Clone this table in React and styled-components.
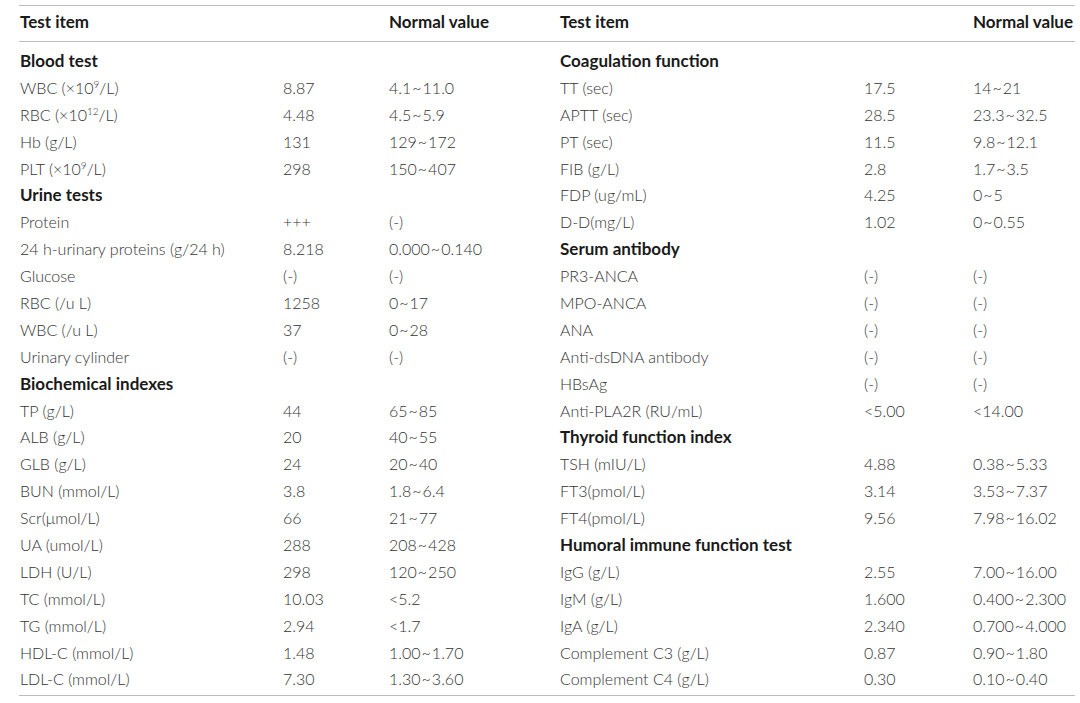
import React from "react";
import styled, { createGlobalStyle } from "styled-components";

const GlobalStyle = createGlobalStyle`
  body {
    margin: 0;
    background: #fff;
    font-family: Lato, "Open Sans", sans-serif;
  }
`;

const cols = "263px 106px 171px 304px 109px 103px";

// hair spaces round the tilde, as in the printed table
const r = (a, b) => `${a}\u200a~\u200a${b}`;

const left = [
  { head: "Blood test" },
  { name: <>WBC (×10<sup>9</sup>/L)</>, value: "8.87", normal: r("4.1", "11.0") },
  { name: <>RBC (×10<sup>12</sup>/L)</>, value: "4.48", normal: r("4.5", "5.9") },
  { name: "Hb (g/L)", value: "131", normal: r("129", "172") },
  { name: <>PLT (×10<sup>9</sup>/L)</>, value: "298", normal: r("150", "407") },
  { head: "Urine tests" },
  { name: "Protein", value: "+++", normal: "(-)" },
  { name: "24 h-urinary proteins (g/24 h)", value: "8.218", normal: r("0.000", "0.140") },
  { name: "Glucose", value: "(-)", normal: "(-)" },
  { name: "RBC (/u L)", value: "1258", normal: r("0", "17") },
  { name: "WBC (/u L)", value: "37", normal: r("0", "28") },
  { name: "Urinary cylinder", value: "(-)", normal: "(-)" },
  { head: "Biochemical indexes" },
  { name: "TP (g/L)", value: "44", normal: r("65", "85") },
  { name: "ALB (g/L)", value: "20", normal: r("40", "55") },
  { name: "GLB (g/L)", value: "24", normal: r("20", "40") },
  { name: "BUN (mmol/L)", value: "3.8", normal: r("1.8", "6.4") },
  { name: "Scr(μmol/L)", value: "66", normal: r("21", "77") },
  { name: "UA (umol/L)", value: "288", normal: r("208", "428") },
  { name: "LDH (U/L)", value: "298", normal: r("120", "250") },
  { name: "TC (mmol/L)", value: "10.03", normal: "<5.2" },
  { name: "TG (mmol/L)", value: "2.94", normal: "<1.7" },
  { name: "HDL-C (mmol/L)", value: "1.48", normal: r("1.00", "1.70") },
  { name: "LDL-C (mmol/L)", value: "7.30", normal: r("1.30", "3.60") },
];

const right = [
  { head: "Coagulation function" },
  { name: "TT (sec)", value: "17.5", normal: r("14", "21") },
  { name: "APTT (sec)", value: "28.5", normal: r("23.3", "32.5") },
  { name: "PT (sec)", value: "11.5", normal: r("9.8", "12.1") },
  { name: "FIB (g/L)", value: "2.8", normal: r("1.7", "3.5") },
  { name: "FDP (ug/mL)", value: "4.25", normal: r("0", "5") },
  { name: "D-D(mg/L)", value: "1.02", normal: r("0", "0.55") },
  { head: "Serum antibody" },
  { name: "PR3-ANCA", value: "(-)", normal: "(-)" },
  { name: "MPO-ANCA", value: "(-)", normal: "(-)" },
  { name: "ANA", value: "(-)", normal: "(-)" },
  { name: "Anti-dsDNA antibody", value: "(-)", normal: "(-)" },
  { name: "HBsAg", value: "(-)", normal: "(-)" },
  { name: "Anti-PLA2R (RU/mL)", value: "<5.00", normal: "<14.00" },
  { head: "Thyroid function index" },
  { name: "TSH (mIU/L)", value: "4.88", normal: r("0.38", "5.33") },
  { name: "FT3(pmol/L)", value: "3.14", normal: r("3.53", "7.37") },
  { name: "FT4(pmol/L)", value: "9.56", normal: r("7.98", "16.02") },
  { head: "Humoral immune function test" },
  { name: "IgG (g/L)", value: "2.55", normal: r("7.00", "16.00") },
  { name: "IgM (g/L)", value: "1.600", normal: r("0.400", "2.300") },
  { name: "IgA (g/L)", value: "2.340", normal: r("0.700", "4.000") },
  { name: "Complement C3 (g/L)", value: "0.87", normal: r("0.90", "1.80") },
  { name: "Complement C4 (g/L)", value: "0.30", normal: r("0.10", "0.40") },
];

function Half({ row }) {
  if (row.head) {
    return (
      <>
        <Heading>{row.head}</Heading>
        <Cell />
        <Cell />
      </>
    );
  }
  return (
    <>
      <Cell>{row.name}</Cell>
      <Cell>{row.value}</Cell>
      <Cell>{row.normal}</Cell>
    </>
  );
}

export default function App() {
  return (
    <Page>
      <GlobalStyle />
      <Table>
        <HeaderRow>
          <HeadCell>Test item</HeadCell>
          <HeadCell />
          <HeadCell>Normal value</HeadCell>
          <HeadCell>Test item</HeadCell>
          <HeadCell />
          <HeadCell>Normal value</HeadCell>
        </HeaderRow>
        <Body>
          {left.map((row, i) => (
            <React.Fragment key={i}>
              <Half row={row} />
              <Half row={right[i]} />
            </React.Fragment>
          ))}
        </Body>
      </Table>
    </Page>
  );
}

const Page = styled.div`
  width: 1080px;
  height: 703px;
  padding: 5px 0 0 19px;
  box-sizing: border-box;
`;

const Table = styled.div`
  width: 1056px;
  border-top: 1.5px solid #bcbcbc;
  border-bottom: 1.5px solid #bcbcbc;
`;

const HeaderRow = styled.div`
  display: grid;
  grid-template-columns: ${cols};
  height: 35px;
  align-items: center;
  border-bottom: 1.5px solid #bcbcbc;
`;

const HeadCell = styled.div`
  font-size: 17px;
  font-weight: 700;
  color: #1a1a1a;
  padding-left: 1px;
  padding-bottom: 5px;
  white-space: nowrap;
`;

const Body = styled.div`
  display: grid;
  grid-template-columns: ${cols};
  grid-auto-rows: 26.9px;
  padding: 6px 0 2px;
`;

const Cell = styled.div`
  font-size: 16px;
  font-weight: 300;
  color: #333;
  line-height: 26.9px;
  padding-left: 1px;
  white-space: nowrap;

  sup {
    font-size: 10px;
    line-height: 0;
    vertical-align: 6px;
  }
`;

const Heading = styled(Cell)`
  font-size: 17px;
  font-weight: 700;
  color: #1a1a1a;
`;
